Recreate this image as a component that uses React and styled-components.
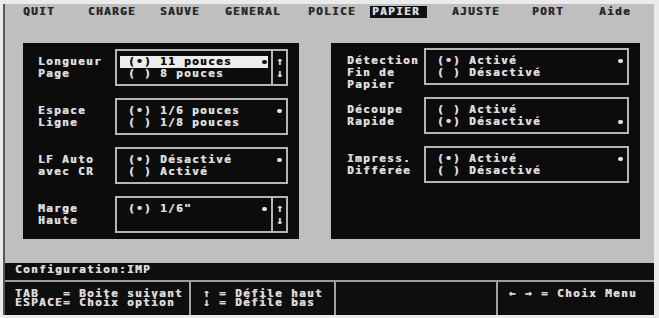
import React from "react";
import styled, { createGlobalStyle } from "styled-components";

const GlobalStyle = createGlobalStyle`
    body {
        margin: 0;
        background: #ebebeb;
    }
`;

const Screen = styled.div`
    width: 649px;
    height: 311px;
    margin: 4px 0 0 3px;
    border-left: 2px solid #575757;
    background: #bfbfbf;
    display: flex;
    flex-direction: column;
    font-family: "DejaVu Sans Mono", "Liberation Mono", monospace;
    font-weight: bold;
    font-size: 11px;
    letter-spacing: 1.38px;
    line-height: 12px;
    white-space: pre;
    text-shadow: 0.5px 0 0 currentColor;
`;

const MenuBar = styled.div`
    height: 19px;
    box-sizing: border-box;
    padding: 2px 0 0 18px;
    display: flex;
    color: #2b2b2b;
`;

const MenuItem = styled.div`
    width: ${(p) => p.$w}px;
    flex: none;
`;

const MenuLabel = styled.span`
    display: inline-block;
    ${(p) =>
        p.$active &&
        `
        background: #101010;
        color: #d6d6d6;
        padding: 0 7px 0 2px;
        margin-left: -2px;
    `}
`;

const MainArea = styled.div`
    display: flex;
    gap: 32px;
    padding: 20px 0 0 18px;
    height: 196px;
`;

const Panel = styled.div`
    width: ${(p) => p.$w}px;
    box-sizing: border-box;
    padding: ${(p) => p.$pad};
    background: #0c0c0c;
    display: flex;
    flex-direction: column;
    gap: 12px;
`;

const Group = styled.div`
    display: flex;
    height: 37px;
    flex: none;
`;

const GroupLabel = styled.div`
    width: 77px;
    flex: none;
    padding-top: 7px;
    color: #dadada;
`;

const OptionBox = styled.div`
    flex: 1;
    display: flex;
    border: 2px solid #b6b6b6;
    box-sizing: border-box;
`;

const OptionList = styled.div`
    flex: 1;
    padding: 5px 0 4px 0;
`;

const OptionRow = styled.div`
    display: flex;
    align-items: center;
    justify-content: space-between;
    height: 12px;
    margin: 0 3px;
    padding: 0 1px 0 8px;
    background: ${(p) => (p.$active ? "#ececec" : "transparent")};
    color: ${(p) => (p.$active ? "#111" : "#dadada")};
`;

const Bullet = styled.span`
    width: 5px;
    height: 4px;
    border-radius: 2px;
    background: ${(p) => (p.$dark ? "#111" : "#e4e4e4")};
`;

const ScrollColumn = styled.div`
    width: 13px;
    border-left: 2px solid #b6b6b6;
    padding-top: 5px;
    display: flex;
    flex-direction: column;
    align-items: center;
    color: #dadada;
    letter-spacing: 0;
`;

const StatusBar = styled.div`
    margin-top: 24px;
    height: 19px;
    box-sizing: border-box;
    padding: 1px 0 0 10px;
    background: #0e0e0e;
    border-bottom: 2px solid #9c9c9c;
    color: #d8d8d8;
`;

const HelpBar = styled.div`
    height: 33px;
    display: flex;
    background: #0e0e0e;
    color: #d8d8d8;
`;

const HelpCell = styled.div`
    box-sizing: border-box;
    width: ${(p) => (p.$w ? `${p.$w}px` : "auto")};
    flex: ${(p) => (p.$w ? "none" : "1")};
    border-right: ${(p) => (p.$last ? "none" : "2px solid #a2a2a2")};
    padding: ${(p) => p.$pad};
    line-height: ${(p) => p.$lh || 12}px;
`;

const menu = [
    ["QUIT", 65],
    ["CHARGE", 72],
    ["SAUVE", 65],
    ["GENERAL", 83],
    ["POLICE", 64],
    ["PAPIER", 80, true],
    ["AJUSTE", 80],
    ["PORT", 67],
    ["Aide", 40],
];

const leftGroups = [
    {
        label: ["Longueur", "Page"],
        options: [{ text: "(•) 11 pouces", on: true, active: true }, { text: "( ) 8 pouces" }],
        scroll: true,
    },
    {
        label: ["Espace", "Ligne"],
        options: [{ text: "(•) 1/6 pouces", on: true }, { text: "( ) 1/8 pouces" }],
    },
    {
        label: ["LF Auto", "avec CR"],
        options: [{ text: "(•) Désactivé", on: true }, { text: "( ) Activé" }],
    },
    {
        label: ["Marge", "Haute"],
        options: [{ text: '(•) 1/6"', on: true }],
        scroll: true,
    },
];

const rightGroups = [
    {
        label: ["Détection", "Fin de", "Papier"],
        options: [{ text: "(•) Activé", on: true }, { text: "( ) Désactivé" }],
    },
    {
        label: ["Découpe", "Rapide"],
        options: [{ text: "( ) Activé" }, { text: "(•) Désactivé", on: true }],
    },
    {
        label: ["Impress.", "Différée"],
        options: [{ text: "(•) Activé", on: true }, { text: "( ) Désactivé" }],
    },
];

const OptionGroup = ({ group }) => (
    <Group>
        <GroupLabel>{group.label.join("\n")}</GroupLabel>
        <OptionBox>
            <OptionList>
                {group.options.map((o) => (
                    <OptionRow key={o.text} $active={o.active}>
                        <span>{o.text}</span>
                        {o.on && <Bullet $dark={o.active} />}
                    </OptionRow>
                ))}
            </OptionList>
            {group.scroll && (
                <ScrollColumn>
                    <span>↑</span>
                    <span>↓</span>
                </ScrollColumn>
            )}
        </OptionBox>
    </Group>
);

export default function App() {
    return (
        <>
            <GlobalStyle />
            <Screen>
                <MenuBar>
                    {menu.map(([name, w, active]) => (
                        <MenuItem key={name} $w={w}>
                            <MenuLabel $active={active}>{name}</MenuLabel>
                        </MenuItem>
                    ))}
                </MenuBar>
                <MainArea>
                    <Panel $w={276} $pad="6px 11px 0 15px">
                        {leftGroups.map((g) => (
                            <OptionGroup key={g.label[0]} group={g} />
                        ))}
                    </Panel>
                    <Panel $w={309} $pad="5px 11px 0 16px">
                        {rightGroups.map((g) => (
                            <OptionGroup key={g.label[0]} group={g} />
                        ))}
                    </Panel>
                </MainArea>
                <StatusBar>Configuration:IMP</StatusBar>
                <HelpBar>
                    <HelpCell $w={186} $pad="7px 0 0 10px" $lh={9}>
                        {"TAB   = Boite suivant\nESPACE= Choix option"}
                    </HelpCell>
                    <HelpCell $w={145} $pad="7px 0 0 12px" $lh={9}>
                        {"↑ = Défile haut\n↓ = Défile bas"}
                    </HelpCell>
                    <HelpCell $w={162} $pad="0" />
                    <HelpCell $last $pad="6px 0 0 11px">
                        {"← → = Choix Menu"}
                    </HelpCell>
                </HelpBar>
            </Screen>
        </>
    );
}
